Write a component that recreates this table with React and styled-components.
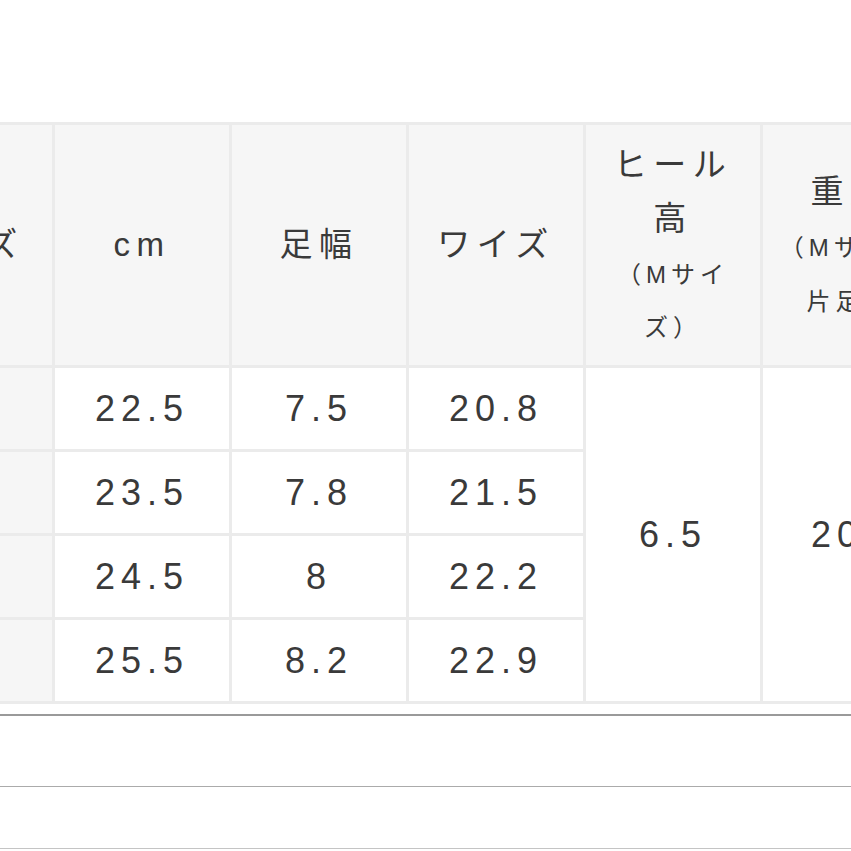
import React from 'react';
import styled, { createGlobalStyle } from 'styled-components';

const GlobalStyle = createGlobalStyle`
  body {
    margin: 0;
    background: #fff;
    color: #3a3a3a;
    font-family: "Liberation Sans", "Noto Sans CJK JP", sans-serif;
  }
`;

const rows = [
  { size: 'S', cm: '22.5', width: '7.5', wise: '20.8' },
  { size: 'M', cm: '23.5', width: '7.8', wise: '21.5' },
  { size: 'L', cm: '24.5', width: '8', wise: '22.2' },
  { size: 'LL', cm: '25.5', width: '8.2', wise: '22.9' },
];

const App = () => (
  <Page>
    <GlobalStyle />
    <TableWrap>
      <SizeTable>
        <thead>
          <tr>
            <HeadCell>サイズ</HeadCell>
            <HeadCell>cm</HeadCell>
            <HeadCell>足幅</HeadCell>
            <HeadCell>ワイズ</HeadCell>
            <HeadCell>
              ヒール高
              <br />
              <Note>（Mサイズ）</Note>
            </HeadCell>
            <HeadCell>
              重量
              <br />
              <Note>（Mサイズ片足）</Note>
            </HeadCell>
            <HeadCell>素材</HeadCell>
          </tr>
        </thead>
        <tbody>
          {rows.map((r, i) => (
            <tr key={r.size}>
              <SizeCell>{r.size}</SizeCell>
              <Cell>{r.cm}</Cell>
              <Cell>{r.width}</Cell>
              <Cell>{r.wise}</Cell>
              {i === 0 && (
                <>
                  <Cell rowSpan={4}>6.5</Cell>
                  <Cell rowSpan={4}>200</Cell>
                  <Cell rowSpan={4}>合成皮革</Cell>
                </>
              )}
            </tr>
          ))}
        </tbody>
      </SizeTable>
    </TableWrap>
    <Section />
    <NextSection />
  </Page>
);

const Page = styled.div`
  width: 851px;
  height: 851px;
  box-sizing: border-box;
  padding-top: 122px;
  overflow: hidden;
`;

const TableWrap = styled.div`
  margin-left: -125px;
  width: 1242px;
`;

const SizeTable = styled.table`
  width: 1242px;
  border-collapse: separate;
  border-spacing: 3px;
  background: #ebebeb;
  table-layout: fixed;
`;

const HeadCell = styled.th`
  width: 146px;
  height: 240px;
  padding: 0 14px;
  background: #f6f6f6;
  font-weight: normal;
  font-size: 33px;
  line-height: 1.62;
  letter-spacing: 6.5px;
  text-align: center;
  vertical-align: middle;
`;

const Note = styled.span`
  font-size: 24px;
  letter-spacing: 5px;
`;

const Cell = styled.td`
  height: 81px;
  padding: 0;
  background: #fff;
  font-size: 36px;
  letter-spacing: 6px;
  text-align: center;
  vertical-align: middle;
`;

const SizeCell = styled(Cell)`
  background: #f6f6f6;
`;

const Section = styled.div`
  margin-top: 10px;
  height: 70px;
  border-top: 2px solid #9a9a9a;
  border-bottom: 1px solid #ababab;
`;

const NextSection = styled.div`
  height: 61px;
  border-bottom: 1px solid #c4c4c4;
`;

export default App;
